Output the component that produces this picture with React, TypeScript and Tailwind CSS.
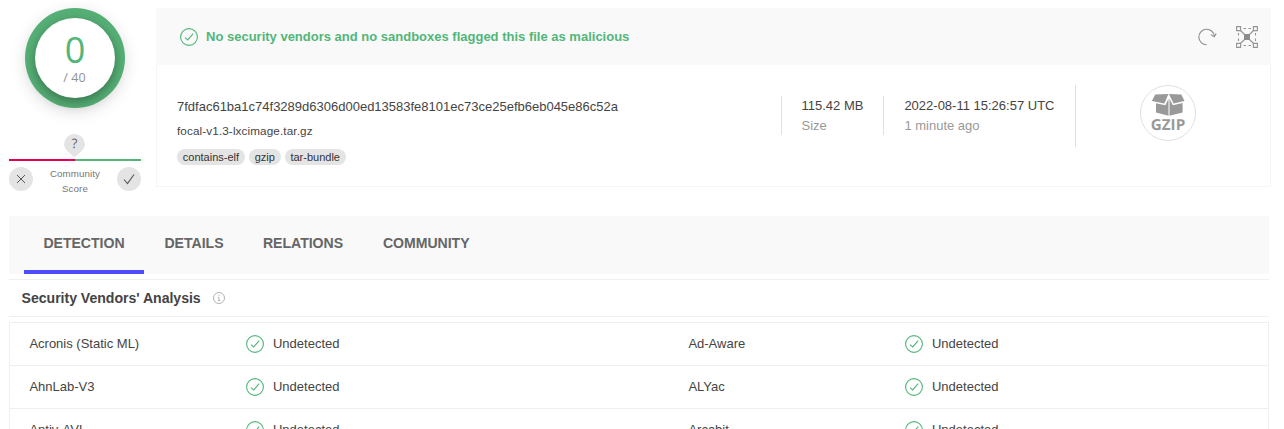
const CheckCircle = () => (
  <svg className="h-[18px] w-[18px] shrink-0" viewBox="0 0 18 18" fill="none" stroke="#52b679">
    <circle cx="9" cy="9" r="8.4" strokeWidth="1.1" />
    <path d="M5 9.6 7.7 11.9 13.2 5.6" strokeWidth="1.1" />
  </svg>
);

const ScoreRing = () => (
  <div className="ml-4 flex h-[100px] w-[100px] items-center justify-center rounded-full bg-[#56b076] shadow-[0_4px_16px_rgba(0,0,0,0.13)]">
    <div className="flex h-20 w-20 flex-col items-center rounded-full bg-white pt-[11px] font-['Open_Sans','Noto_Sans',sans-serif] shadow-[0_4px_12px_rgba(0,0,0,0.35)]">
      <span className="text-[36px] leading-[42px] font-normal text-[#52b679]">0</span>
      <span className="pr-px text-[12.6px] leading-[14px] text-[#939393]">/ 40</span>
    </div>
  </div>
);

const CommunityScore = () => (
  <div className="mt-[26px] w-[132px]">
    <div className="flex h-[25px] justify-center">
      <svg className="h-6 w-[22px]" viewBox="0 0 22 24">
        <path d="M10.5 23.2C8.5 21.3 0 15.8 0 10.2A10.5 10.2 0 0 1 21 10.2C21 15.8 12.5 21.3 10.5 23.2Z" fill="#e4e4e4" />
        <text x="10.5" y="14" textAnchor="middle" fontSize="13" fill="#666" fontFamily="Open Sans, sans-serif" textRendering="geometricPrecision">?</text>
      </svg>
    </div>
    <div className="flex h-0.5">
      <div className="w-1/2 bg-[#e3004f]" />
      <div className="w-1/2 bg-[#56b578]" />
    </div>
    <div className="mt-1.5 flex justify-between">
      <div className="flex h-6 w-6 items-center justify-center rounded-full bg-[#e4e4e4]">
        <svg className="h-3 w-3" viewBox="0 0 12 12" stroke="#555" strokeWidth="1"><path d="m2 2 8 8M10 2l-8 8" /></svg>
      </div>
      <div className="-mt-px text-center text-[9.75px] leading-[15px] tracking-[0.1px] text-[#777]">Community<br />Score</div>
      <div className="flex h-6 w-6 items-center justify-center rounded-full bg-[#e4e4e4]">
        <svg className="h-3 w-3" viewBox="0 0 12 12" fill="none" stroke="#555" strokeWidth="1.1"><path d="m1 6.5 3.5 4L11 1.5" /></svg>
      </div>
    </div>
  </div>
);

const ReanalyzeIcon = () => (
  <svg className="h-5 w-5" viewBox="0 0 20 20" fill="none" stroke="#8c8c8c" strokeWidth="1.1">
    <path d="M9.7 17.8A7.8 7.8 0 1 1 17.4 9.2" />
    <path d="m13.8 7.6 3.4 2.2 2-3.2" />
  </svg>
);

const GraphIcon = () => (
  <svg className="h-[22px] w-[22px]" viewBox="0 0 22 22" fill="none" stroke="#949494" strokeWidth="1.1">
    <path d="M.6.6h4v4h-4zM17.4.6h4v4h-4zM.6 17.4h4v4h-4zM17.4 17.4h4v4h-4z" />
    <path d="m4.5 4.5 13 13M17.5 4.5l-13 13" />
    <path d="M7.5 2.5H10M12.5 2.5H15M7.5 19.5H10M12.5 19.5H15M2.5 7V9.5M2.5 12.5V15M19.5 7V9.5M19.5 12.5V15" />
    <path d="M8 8h6v6H8z" fill="#8c8c8c" stroke="none" />
  </svg>
);

const GzipIcon = () => (
  <svg className="h-14 w-14" viewBox="0 0 56 56">
    <circle cx="28" cy="28" r="27.5" fill="#fff" stroke="#e0e0e0" />
    <path d="M15.2 9.6 28.4 8.9 24.4 18.5 11.8 15.9ZM28.9 8.9 41.3 9.4 44.5 15.9 33.6 18.5Z" fill="#999" />
    <path d="M16 18.3 25.4 20.2 28.5 13.7V30.8L16 27.6ZM29.5 13.7 32.9 20.2 42.6 18V27.6L29.5 30.8Z" fill="#999" />
    <text x="28" y="44.6" textAnchor="middle" fontSize="15.2" fontWeight="700" fill="#999" fontFamily="Open Sans, sans-serif" textRendering="geometricPrecision">GZIP</text>
  </svg>
);

const Tag = ({ label }: { label: string }) => (
  <span className="h-4 rounded-full bg-[#e4e4e4] px-[5.8px] text-[11px] leading-4 text-[#333]">{label}</span>
);

const FileCard = () => (
  <section className="h-[179px] w-[1115px] border border-[#f5f5f5]">
    <div className="-mx-px -mt-px flex h-[57px] items-center bg-[#f9f9f9] pr-[13px] pl-6">
      <CheckCircle />
      <h1 className="ml-2 flex-1 text-[13px] font-bold text-[#52b679]">No security vendors and no sandboxes flagged this file as malicious</h1>
      <ReanalyzeIcon />
      <div className="ml-[19px]"><GraphIcon /></div>
    </div>
    <div className="flex items-start pt-5 pl-5">
      <div className="w-[604px] pt-3">
        <div className="text-[13px] leading-[19px] text-[#444]">7fdfac61ba1c74f3289d6306d00ed13583fe8101ec73ce25efb6eb045e86c52a</div>
        <div className="mt-[7px] text-[11.7px] leading-4 tracking-[0.12px] text-[#444]">focal-v1.3-lxcimage.tar.gz</div>
        <div className="mt-2.5 flex gap-1">
          <Tag label="contains-elf" /><Tag label="gzip" /><Tag label="tar-bundle" />
        </div>
      </div>
      <div className="mt-[11px] h-[39px] w-[102px] border-l border-[#e0e0e0] pl-[19.5px] text-[13px] leading-5 whitespace-nowrap text-[#444]">
        <div>115.42 MB</div><div className="text-[#999]">Size</div>
      </div>
      <div className="mt-[11px] h-[39px] w-48 border-l border-[#e0e0e0] pl-[20.4px] text-[13px] leading-5 whitespace-nowrap text-[#444]">
        <div>2022-08-11 15:26:57 UTC</div><div className="text-[#999]">1 minute ago</div>
      </div>
      <div className="h-[62px] border-l border-[#e0e0e0] pl-16"><GzipIcon /></div>
    </div>
  </section>
);

const Verdict = ({ vendor }: { vendor: string }) => (
  <div className="flex h-full w-[659px] shrink-0 items-center text-[13px] text-[#444]">
    <span className="w-[217px] pb-px">{vendor}</span>
    <CheckCircle />
    <span className="ml-[8.6px] pb-px">Undetected</span>
  </div>
);

const rows = [["Acronis (Static ML)", "Ad-Aware"], ["AhnLab-V3", "ALYac"], ["Antiy-AVL", "Arcabit"]];

export default function App() {
  return (
    <main className="h-[429px] w-[1284px] overflow-hidden bg-white pt-2 pl-[9px] font-['Liberation_Sans',Arial,sans-serif]">
      <div className="flex h-[208px] items-start">
        <aside className="w-[147px] shrink-0"><ScoreRing /><CommunityScore /></aside>
        <FileCard />
      </div>
      <div className="w-[1260px]">
        <nav className="flex h-[58px] bg-[#f9f9f9] pl-[15px] text-[14.1px] leading-5 font-bold tracking-[-0.03px] text-[#666]">
          <span className="mr-[1px] h-full w-[120px] border-b-4 border-[#4d4dff] pt-[17px] text-center">DETECTION</span>
          <span className="w-[98px] pt-[17px] text-center">DETAILS</span>
          <span className="w-[120px] pt-[17px] text-center">RELATIONS</span>
          <span className="w-[126.5px] pt-[17px] text-center">COMMUNITY</span>
        </nav>
        <div className="mt-[5px] flex h-[38px] items-center border-y border-[#efefef] pl-[12.6px]">
          <h2 className="text-[14.1px] leading-5 font-bold tracking-[-0.03px] text-[#444]">Security Vendors' Analysis</h2>
          <svg className="ml-3 h-3 w-3" viewBox="0 0 12 12" fill="none" stroke="#aaa" strokeWidth=".9">
            <circle cx="6" cy="6" r="5.5" /><path d="M6 2.7v1.2M5 5.3h1v3.2M4.8 8.6h2.5" />
          </svg>
        </div>
        <div className="mt-[5px] border border-[#efefef]">
          {rows.map(([left, right]) => (
            <div key={left} className="flex h-[43px] border-b border-[#efefef] pl-[19.4px]">
              <Verdict vendor={left} /><Verdict vendor={right} />
            </div>
          ))}
        </div>
      </div>
    </main>
  );
}
